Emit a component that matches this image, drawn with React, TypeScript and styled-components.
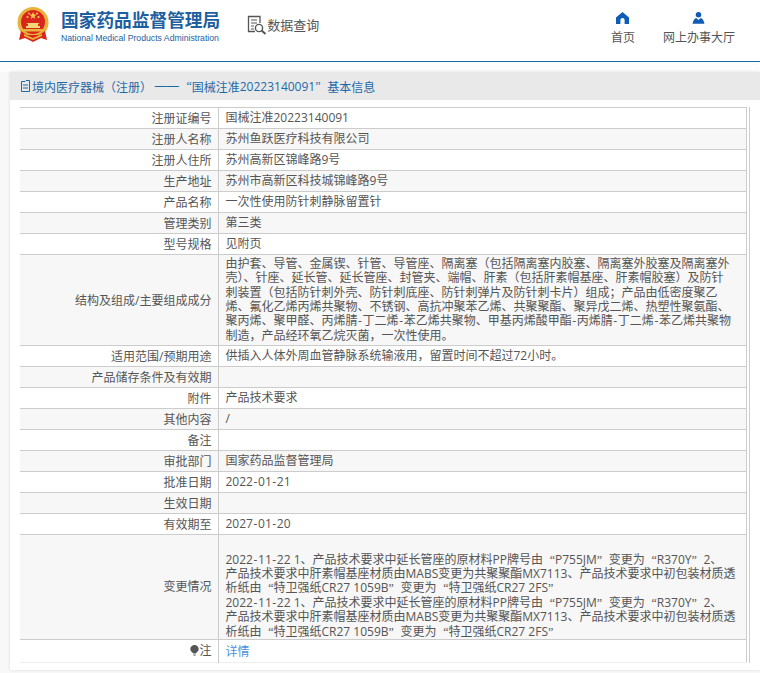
import React from "react";
import styled, { createGlobalStyle } from "styled-components";

const FONT = `"Open Sans", "Noto Sans CJK SC", sans-serif`;
const CJK = `"Noto Sans CJK SC", sans-serif`;

type Row = { label: string; value?: string; lines?: string[]; tall?: number; pad?: number; shade?: boolean };

const CHANGE_A =
  "2022-11-22 1、产品技术要求中延长管座的原材料PP牌号由“P755JM”变更为“R370Y”2、";
const CHANGE_B =
  "产品技术要求中肝素帽基座材质由MABS变更为共聚聚酯MX7113、产品技术要求中初包装材质透";
const CHANGE_C = "析纸由“特卫强纸CR27 1059B”变更为“特卫强纸CR27 2FS”";

const rows: Row[] = [
  { label: "注册证编号", value: "国械注准20223140091" },
  { label: "注册人名称", value: "苏州鱼跃医疗科技有限公司", shade: true },
  { label: "注册人住所", value: "苏州高新区锦峰路9号" },
  { label: "生产地址", value: "苏州市高新区科技城锦峰路9号", shade: true },
  { label: "产品名称", value: "一次性使用防针刺静脉留置针" },
  { label: "管理类别", value: "第三类", shade: true },
  { label: "型号规格", value: "见附页" },
  {
    label: "结构及组成/主要组成成分",
    tall: 91,
    shade: true,
    lines: [
      "由护套、导管、金属锲、针管、导管座、隔离塞（包括隔离塞内胶塞、隔离塞外胶塞及隔离塞外",
      "壳）、针座、延长管、延长管座、封管夹、端帽、肝素（包括肝素帽基座、肝素帽胶塞）及防针",
      "刺装置（包括防针刺外壳、防针刺底座、防针刺弹片及防针刺卡片）组成；产品由低密度聚乙",
      "烯、氟化乙烯丙烯共聚物、不锈钢、高抗冲聚苯乙烯、共聚聚酯、聚异戊二烯、热塑性聚氨酯、",
      "聚丙烯、聚甲醛、丙烯腈-丁二烯-苯乙烯共聚物、甲基丙烯酸甲酯-丙烯腈-丁二烯-苯乙烯共聚物",
      "制造，产品经环氧乙烷灭菌，一次性使用。",
    ],
  },
  { label: "适用范围/预期用途", value: "供插入人体外周血管静脉系统输液用，留置时间不超过72小时。" },
  { label: "产品储存条件及有效期", shade: true },
  { label: "附件", value: "产品技术要求" },
  { label: "其他内容", value: "/", shade: true },
  { label: "备注" },
  { label: "审批部门", value: "国家药品监督管理局", shade: true },
  { label: "批准日期", value: "2022-01-21" },
  { label: "生效日期", shade: true },
  { label: "有效期至", value: "2027-01-20" },
  {
    label: "变更情况",
    tall: 104,
    pad: 17.6,
    shade: true,
    lines: [CHANGE_A, CHANGE_B, CHANGE_C, CHANGE_A, CHANGE_B, CHANGE_C],
  },
];

const Global = createGlobalStyle`
  html, body { margin: 0; padding: 0; background: #f8f8f8; }
  body { font-family: ${FONT}; color: #555; }
`;

const Page = styled.div`
  width: 760px;
  height: 673px;
  overflow: hidden;
  display: flex;
  flex-direction: column;
`;

const Header = styled.header`
  height: 61px;
  display: flex;
  align-items: flex-start;
  background: #fff;
  border-bottom: 1px solid #1b6aa5;
`;

const Brand = styled.div`
  display: flex;
  padding: 7px 0 0 17px;
`;

const BrandText = styled.div`
  margin-left: 12px;
  padding-top: 2px;
`;

const BrandName = styled.div`
  font-size: 17.7px;
  line-height: 22px;
  font-weight: 700;
  color: #1d5f9f;
  white-space: nowrap;
`;

const BrandEn = styled.div`
  font-family: "Liberation Sans", Arial, sans-serif;
  font-size: 8.7px;
  line-height: 12px;
  margin-top: 1px;
  color: #1d5f9f;
  white-space: nowrap;
`;

const Query = styled.div`
  display: flex;
  align-items: center;
  margin: 15px 0 0 27px;
  font-size: 13px;
  line-height: 20px;
  color: #555;
`;

const Nav = styled.nav`
  display: flex;
  margin-left: auto;
  padding: 12px 25px 0 0;
  gap: 28px;
`;

const NavItem = styled.a`
  display: flex;
  flex-direction: column;
  align-items: center;
  font-size: 12px;
  line-height: 16px;
  color: #555;
  gap: 6px;
`;

const Dots = styled.div`
  height: 10px;
  background-color: #fdfdfd;
  background-image: radial-gradient(#e4e4e4 0.5px, transparent 0.6px);
  background-size: 2px 2px;
`;

const Panel = styled.section`
  margin-left: 10px;
  width: 750px;
  height: 598px;
  background: #fff;
  box-shadow: 0 0 3px rgba(0, 0, 0, 0.12);
`;

const PanelTitle = styled.h1`
  margin: 0;
  height: 28px;
  padding-left: 10px;
  display: flex;
  align-items: center;
  background: #e9e9e9;
  font-size: 12px;
  font-weight: 400;
  color: #1d6aa8;
  white-space: pre;
`;

const TitleText = styled.span`
  font-family: ${CJK};
`;

const TitleNum = styled.span`
  font-family: ${FONT};
`;

const Dash = styled.span`
  font-family: "Liberation Sans", Arial, sans-serif;
  padding-right: 1px;
`;

const TableWrap = styled.div`
  margin: 7px 0 0 10px;
  width: 729px;
  border-right: 1px solid #ccc;
`;

const Table = styled.table`
  width: 727px;
  border-collapse: collapse;
  table-layout: fixed;
  border-top: 1px solid #ccc;
  border-right: 1px solid #ccc;
  font-size: 12px;
`;

const Tr = styled.tr<{ $shade: boolean; $height: number }>`
  height: ${(p) => p.$height}px;
  background: ${(p) => (p.$shade ? "#f7f7f7" : "#fff")};
  border-bottom: 1px solid #ccc;
`;

const LastTr = styled.tr`
  height: 23px;
  background: #fff;
  border-bottom: 1px solid #eee;
`;

const ColLabel = styled.col`
  width: 198px;
`;

const Label = styled.td`
  padding: 0 6px 0 0;
  text-align: right;
  color: #555;
  border-right: 1px solid #ccc;
  line-height: 15px;
  white-space: nowrap;
`;

const Value = styled.td<{ $pad?: number }>`
  padding: ${(p) => p.$pad ?? 0}px 0 0 7px;
  color: #555;
  line-height: 14.4px;
`;

const Line = styled.div`
  height: 14.4px;
  white-space: nowrap;
`;

const Quote = styled.span<{ $close: boolean }>`
  display: inline-block;
  width: 12px;
  line-height: 1;
  font-family: "Liberation Serif", serif;
  text-align: ${(p) => (p.$close ? "left" : "right")};
`;

const Hyphen = styled.span`
  padding: 0 0.6px;
`;

const DetailLink = styled.a`
  color: #4a90d9;
  font-size: 12px;
`;

const Hint = styled.span`
  display: inline-flex;
  align-items: center;
  justify-content: flex-end;
`;

// quotes and hyphens are wider in the source font than in Open Sans
const withMarks = (text: string) =>
  text.split(/([“”-])/).map((part, i) => {
    if (part === "“" || part === "”") return <Quote key={i} $close={part === "”"}>{part}</Quote>;
    if (part === "-") return <Hyphen key={i}>-</Hyphen>;
    return part;
  });

const Emblem = () => (
  <svg width="32" height="36" viewBox="0 0 32 36">
    <circle cx="16" cy="15.5" r="15.5" fill="#e8b33a" />
    <circle cx="16" cy="15" r="12" fill="#d9261c" />
    <path d="M4 24 L10 28 L22 28 L28 24 L30 33 L24 31 L16 35 L8 31 L2 33 Z" fill="#d9261c" />
    <path d="M7 27 L16 31 L25 27 L25 29 L16 33 L7 29 Z" fill="#e8b33a" />
    <path d="M16 5 l1 2.6 2.7 0 -2.2 1.7 .8 2.6 -2.3 -1.6 -2.3 1.6 .8 -2.6 -2.2 -1.7 2.7 0z" fill="#f4cf55" />
    <circle cx="10.5" cy="10" r="1.1" fill="#f4cf55" />
    <circle cx="21.5" cy="10" r="1.1" fill="#f4cf55" />
    <circle cx="12" cy="6.5" r="0.9" fill="#f4cf55" />
    <circle cx="20" cy="6.5" r="0.9" fill="#f4cf55" />
    <path d="M9 21 L23 21 L23 19 L21 19 L21 17 L23 16 L9 16 L11 17 L11 19 L9 19 Z" fill="#f3d676" />
    <rect x="6" y="22" width="20" height="2.5" fill="#e8b33a" />
  </svg>
);

const QueryIcon = () => (
  <svg width="20" height="20" viewBox="0 0 20 20" fill="none" stroke="#555">
    <path d="M13 8V1.5H1.5V16.5H8" strokeWidth="1.3" />
    <path d="M4 5H10M4 8H10M4 11H7M4 14H7" strokeWidth="1.2" />
    <circle cx="12" cy="13" r="3.6" strokeWidth="1.4" />
    <path d="M14.6 15.6L18.5 19" strokeWidth="2" />
  </svg>
);

const DocIcon = () => (
  <svg width="12" height="12" viewBox="0 0 12 12" fill="none" stroke="#1d6aa8">
    <path d="M1.5 11.5V1.5H5L6 .5H9.5V11.5Z" />
    <path d="M3 5H8M3 8H8" />
  </svg>
);

const HomeIcon = () => (
  <svg width="13" height="12" viewBox="0 0 13 12" fill="#0e5cb5">
    <path d="M6.5 0L13 5.4V12H8.6V8A2.1 2.1 0 0 0 4.4 8V12H0V5.4Z" />
  </svg>
);

const UserIcon = () => (
  <svg width="13" height="12" viewBox="0 0 13 13" fill="#0e5cb5">
    <circle cx="6.5" cy="3" r="3" />
    <path d="M4 6.4L6.5 8.6L9 6.4C11 6.8 12.4 9.5 13 12.6H0C.6 9.5 2 6.8 4 6.4Z" />
  </svg>
);

const BulbIcon = () => (
  <svg width="9" height="11" viewBox="0 0 9 11" fill="#555">
    <path d="M4.5 0A4.2 4.2 0 0 1 8.7 4.2C8.7 6 7 7 5.6 8.6H3.4C2 7 .3 6 .3 4.2A4.2 4.2 0 0 1 4.5 0Z" />
    <rect x="3.4" y="9.2" width="2.2" height="1.6" fill="#888" />
  </svg>
);

const App = () => (
  <>
    <Global />
    <Page>
      <Header>
        <Brand>
          <Emblem />
          <BrandText>
            <BrandName>国家药品监督管理局</BrandName>
            <BrandEn>National Medical Products Administration</BrandEn>
          </BrandText>
        </Brand>
        <Query>
          <QueryIcon />
          数据查询
        </Query>
        <Nav>
          <NavItem>
            <HomeIcon />
            首页
          </NavItem>
          <NavItem>
            <UserIcon />
            网上办事大厅
          </NavItem>
        </Nav>
      </Header>
      <Dots />
      <Panel>
        <PanelTitle>
          <DocIcon />
          <TitleText>境内医疗器械（注册） </TitleText>
          <Dash>——</Dash>
          <Quote $close={false}>“</Quote>
          <TitleText>国械注准</TitleText>
          <TitleNum>20223140091</TitleNum>
          <Quote $close>”</Quote>
          <TitleText>基本信息</TitleText>
        </PanelTitle>
        <TableWrap>
          <Table>
            <colgroup>
              <ColLabel />
              <col />
            </colgroup>
            <tbody>
              {rows.map((r) => (
                <Tr key={r.label} $shade={!!r.shade} $height={r.tall ?? 21}>
                  <Label>{r.label}</Label>
                  <Value $pad={r.pad}>
                    {r.lines ? r.lines.map((l, j) => <Line key={j}>{withMarks(l)}</Line>) : withMarks(r.value ?? "")}
                  </Value>
                </Tr>
              ))}
              <LastTr>
                <Label>
                  <Hint>
                    <BulbIcon />注
                  </Hint>
                </Label>
                <Value $pad={3}>
                  <DetailLink>详情</DetailLink>
                </Value>
              </LastTr>
            </tbody>
          </Table>
        </TableWrap>
      </Panel>
    </Page>
  </>
);

export default App;
